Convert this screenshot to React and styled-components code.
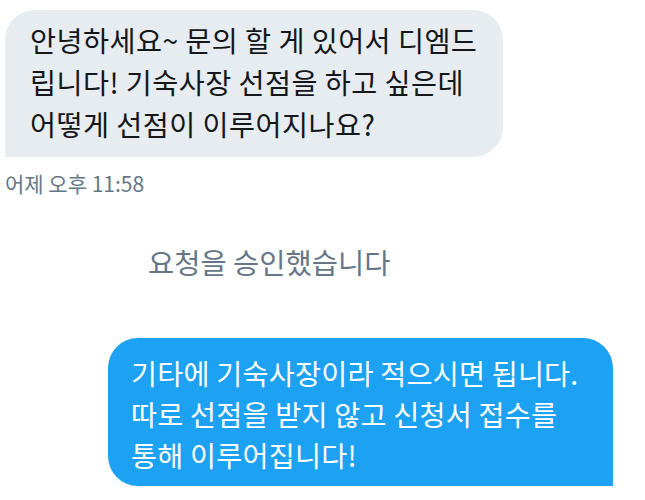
import React from "react";
import styled, { createGlobalStyle } from "styled-components";

const Global = createGlobalStyle`
  html, body { margin: 0; padding: 0; background: #ffffff; }
  body { font-family: "Noto Sans CJK KR", "Noto Sans", sans-serif; }
`;

const Page = styled.div`
  width: 645px;
  height: 500px;
  display: flex;
  flex-direction: column;
  overflow: hidden;
`;

const Bubble = styled.div`
  box-sizing: border-box;
  width: ${(p) => p.$w}px;
  padding: ${(p) => p.$pad};
  font-size: 28.3px;
  line-height: ${(p) => p.$lh}px;
  letter-spacing: ${(p) => p.$ls}px;
  white-space: nowrap;
  color: ${(p) => (p.$mine ? "#ffffff" : "#14171a")};
  background: ${(p) => (p.$mine ? "#1da1f2" : "#e6ecf0")};
  border-radius: ${(p) => (p.$mine ? "30px 30px 0 30px" : "30px 30px 30px 0")};
`;

const Received = styled(Bubble)`
  margin: 10px 0 0 5px;
`;

const Sent = styled(Bubble)`
  align-self: flex-end;
  margin: 0 32px 0 0;
`;

const Time = styled.div`
  margin: 14px 0 0 5px;
  font-size: 21px;
  line-height: 24px;
  color: #657786;
`;

const Status = styled.div`
  margin: 51px 0 60px 148px;
  font-size: 28.5px;
  line-height: 32px;
  color: #657786;
`;

export default function App() {
  return (
    <Page>
      <Global />
      <Received $w={498} $pad="9px 20px 12px 25px" $lh={42} $ls={0.45}>
        안녕하세요~ 문의 할 게 있어서 디엠드
        <br />
        립니다! 기숙사장 선점을 하고 싶은데
        <br />
        어떻게 선점이 이루어지나요?
      </Received>
      <Time>어제 오후 11:58</Time>
      <Status>요청을 승인했습니다</Status>
      <Sent $mine $w={505} $pad="13.5px 20px 11.5px 23px" $lh={41} $ls={0.2}>
        기타에 기숙사장이라 적으시면 됩니다.
        <br />
        따로 선점을 받지 않고 신청서 접수를
        <br />
        통해 이루어집니다!
      </Sent>
    </Page>
  );
}
